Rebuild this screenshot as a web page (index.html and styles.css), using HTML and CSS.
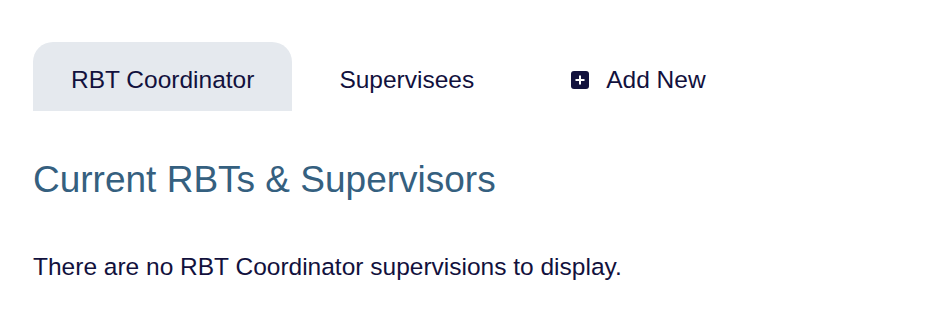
FILE: index.html
```html
<!DOCTYPE html>
<html>
<head>
    <title>RBT Supervisions</title>
    <link rel="stylesheet" href="styles.css">
</head>
<body>
    <div class="page">
        <div class="tabs">
            <div class="tab active">RBT Coordinator</div>
            <div class="tab">Supervisees</div>
            <div class="tab add">
                <svg class="plus" width="18" height="18" viewBox="0 0 18 18">
                    <rect x="0" y="0" width="18" height="18" rx="3" fill="#12113d"/>
                    <path d="M9 4.5v9M4.5 9h9" stroke="#fff" stroke-width="2"/>
                </svg>
                Add New
            </div>
        </div>
        <h2 class="title">Current RBTs &amp; Supervisors</h2>
        <p class="empty">There are no RBT Coordinator supervisions to display.</p>
    </div>
</body>
</html>
```

FILE: styles.css
```css
body {
    margin: 0;
    font-family: "Liberation Sans", Arial, sans-serif;
    background-color: #fff;
    color: #12113d;
}

.page {
    padding: 42px 33px 0;
}

.tabs {
    display: flex;
    align-items: stretch;
}

.tab {
    display: flex;
    align-items: center;
    box-sizing: border-box;
    height: 69px;
    padding: 6px 48px 0 47px;
    font-size: 24.5px;
    border-radius: 20px 20px 0 0;
}

.tab.active {
    padding: 6px 38px 0;
    background-color: #e5e9ee;
}

.tab.add {
    padding-left: 49px;
}

.plus {
    margin-right: 17px;
}

.title {
    margin: 48px 0 0;
    font-size: 37px;
    font-weight: normal;
    color: #35607f;
}

.empty {
    margin: 52px 0 0;
    font-size: 24.5px;
}
```
